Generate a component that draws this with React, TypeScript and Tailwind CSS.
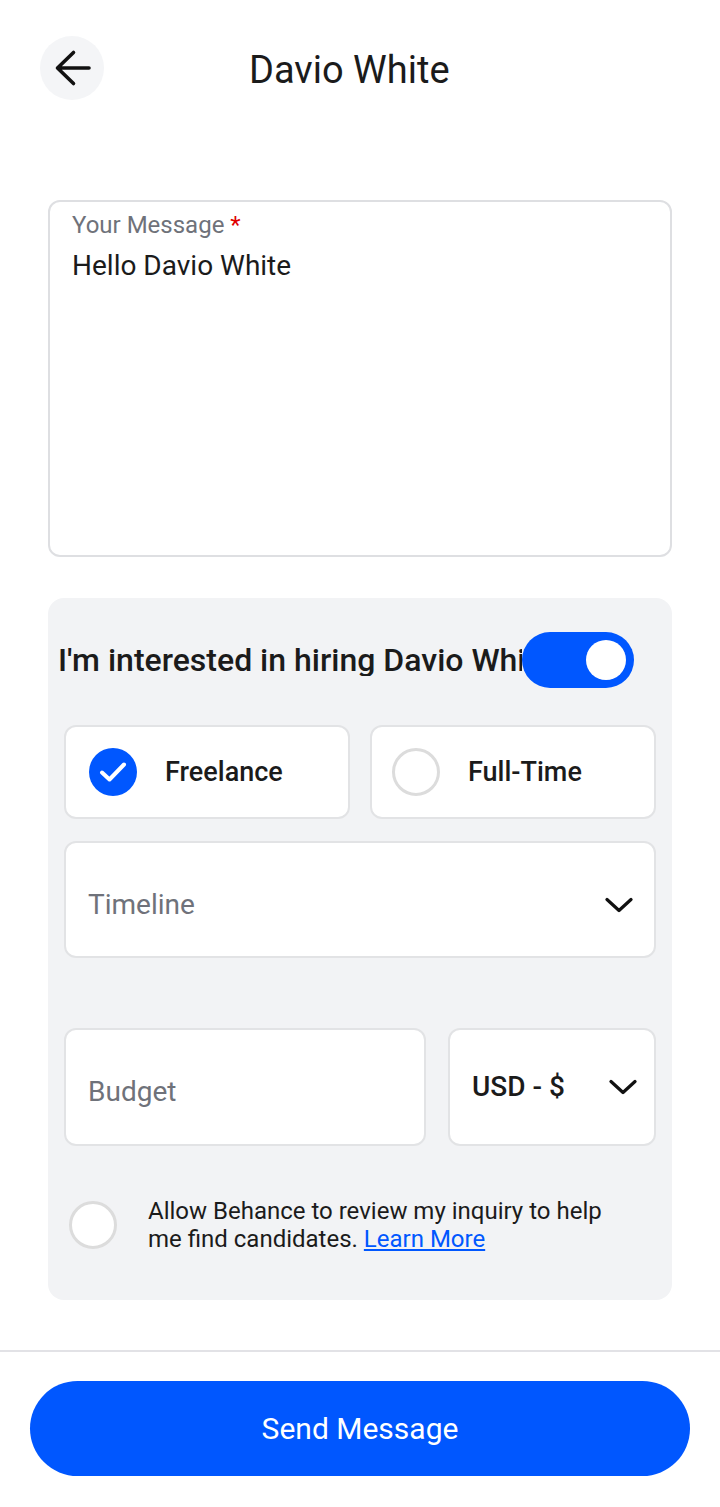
import { useState } from "react";

const Chevron = () => (
  <svg width="28" height="16" viewBox="0 0 28 16" fill="none">
    <path d="M2 2.5 L14 13.5 L26 2.5" stroke="#111" strokeWidth="3.2" strokeLinecap="round" strokeLinejoin="round" />
  </svg>
);

const CheckCircle = ({ checked }: { checked: boolean }) =>
  checked ? (
    <span className="flex h-12 w-12 shrink-0 items-center justify-center rounded-full bg-[#0057ff]">
      <svg width="48" height="48" viewBox="0 0 48 48" fill="none">
        <path d="M13 24.5 L20.5 31.5 L35 16.5" stroke="#fff" strokeWidth="4" strokeLinecap="round" strokeLinejoin="round" />
      </svg>
    </span>
  ) : (
    <span className="block h-12 w-12 shrink-0 rounded-full border-[3px] border-[#dcdcdc] bg-white" />
  );

export default function App() {
  const [type, setType] = useState<"freelance" | "fulltime">("freelance");
  const [hiring, setHiring] = useState(true);
  const [allow, setAllow] = useState(false);

  return (
    <div className="min-h-screen bg-white font-['Roboto',sans-serif] text-[#1b1b1b]">
      {/* header */}
      <header className="flex items-center px-10 pt-9">
        <button className="flex h-16 w-16 items-center justify-center rounded-full bg-[#f4f5f7]">
          <svg width="64" height="64" viewBox="0 0 64 64" fill="none">
            <path d="M33.5 16.5 L17.5 32 L33.5 47.5 M17.5 32 H49" stroke="#111" strokeWidth="3.6" strokeLinecap="round" strokeLinejoin="round" />
          </svg>
        </button>
        <h1 className="ml-[145px] mt-[3px] text-[38px] leading-none font-normal">Davio White</h1>
      </header>

      {/* message */}
      <div className="mx-12 mt-[100px] h-[357px] rounded-xl border-2 border-[#dedfe2] px-[22px] pt-[10px]">
        <div className="text-[24px] leading-[27px] text-[#6f727a]">
          Your Message <span className="text-[#e00000]">*</span>
        </div>
        <div className="mt-[10px] text-[28px] leading-[33px]">Hello Davio White</div>
      </div>

      {/* hiring */}
      <section className="mx-12 mt-[41px] rounded-2xl bg-[#f2f3f5] pt-[34px] pb-[47px]">
        <div className="flex items-center pl-[10px] pr-[38px]">
          <span className="min-w-0 flex-1 overflow-hidden whitespace-nowrap text-[32px] font-medium leading-none">
            I'm interested in hiring Davio White
          </span>
          <button
            onClick={() => setHiring(!hiring)}
            className="flex h-14 w-28 shrink-0 items-center justify-end rounded-full bg-[#0057ff] pr-2"
          >
            <span className="h-10 w-10 rounded-full bg-white" />
          </button>
        </div>

        <div className="mt-[37px] grid grid-cols-2 gap-5 px-4">
          <button
            onClick={() => setType("freelance")}
            className="flex h-[94px] items-center gap-7 rounded-xl border-2 border-[#e2e3e5] bg-white pl-[23px]"
          >
            <CheckCircle checked={type === "freelance"} />
            <span className="text-[27px] font-medium">Freelance</span>
          </button>
          <button
            onClick={() => setType("fulltime")}
            className="flex h-[94px] items-center gap-7 rounded-xl border-2 border-[#e2e3e5] bg-white pl-[20px]"
          >
            <CheckCircle checked={type === "fulltime"} />
            <span className="text-[27px] font-medium">Full-Time</span>
          </button>
        </div>

        <div className="mx-4 mt-[22px] flex h-[117px] items-center justify-between rounded-xl border-2 border-[#e2e3e5] bg-white pt-[11px] pl-[22px] pr-[21px]">
          <span className="text-[28px] text-[#6f727a]">Timeline</span>
          <Chevron />
        </div>

        <div className="mx-4 mt-[70px] flex gap-[22px]">
          <div className="flex h-[118px] flex-1 items-center rounded-xl border-2 border-[#e2e3e5] bg-white pt-[10px] pl-[22px]">
            <span className="text-[28px] text-[#6f727a]">Budget</span>
          </div>
          <div className="flex h-[118px] w-[208px] items-center justify-between rounded-xl border-2 border-[#e2e3e5] bg-white pl-[22px] pr-[17px]">
            <span className="text-[28px] font-medium">USD - $</span>
            <Chevron />
          </div>
        </div>

        <div className="mt-[51px] flex items-center pl-[21px] pr-[50px]">
          <button onClick={() => setAllow(!allow)} className="shrink-0">
            <CheckCircle checked={allow} />
          </button>
          <p className="ml-[31px] text-[24px] leading-[28px]">
            Allow Behance to review my inquiry to help me find candidates.{" "}
            <a href="#" className="text-[#0057ff] underline">
              Learn More
            </a>
          </p>
        </div>
      </section>

      {/* footer */}
      <div className="mt-[50px] border-t-2 border-[#e2e2e6] px-[30px] pt-[29px] pb-[31px]">
        <button className="flex h-[95px] w-full items-center justify-center rounded-full bg-[#0057ff] text-[30px] text-white">
          Send Message
        </button>
      </div>
    </div>
  );
}
